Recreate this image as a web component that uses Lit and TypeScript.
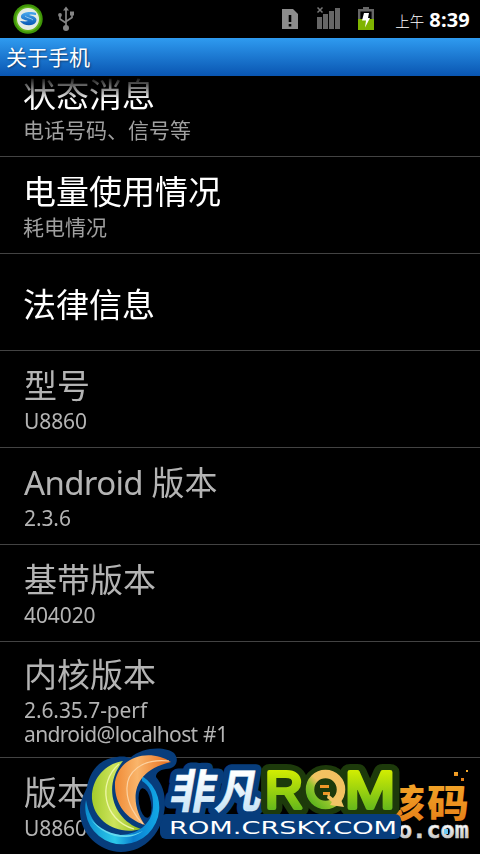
import { LitElement, css, html, nothing, svg } from 'lit';
import { customElement, property } from 'lit/decorators.js';

interface AboutItem {
  title: string;
  lines: string[];
  enabled?: boolean;
}

const ITEMS: AboutItem[] = [
  { title: '状态消息', lines: ['电话号码、信号等'], enabled: true },
  { title: '电量使用情况', lines: ['耗电情况'], enabled: true },
  { title: '法律信息', lines: [], enabled: true },
  { title: '型号', lines: ['U8860'] },
  { title: 'Android 版本', lines: ['2.3.6'] },
  { title: '基带版本', lines: ['404020'] },
  { title: '内核版本', lines: ['2.6.35.7-perf', 'android@localhost #1'] },
  { title: '版本号', lines: ['U8860'] },
];

// Long latin words are set a little tighter than digits.
const tighten = (text: string) =>
  text
    .split(/([a-z@]{5,})/i)
    .map((part, i) => (i % 2 ? html`<span class="latin">${part}</span>` : part));

@customElement('status-bar')
export class StatusBar extends LitElement {
  static styles = css`
    :host {
      display: flex;
      height: 38px;
      background: #000;
      color: #fff;
    }

    svg {
      display: block;
      flex: 1;
    }

    .clock {
      display: flex;
      align-items: baseline;
      gap: 5px;
      padding: 7px 10px 0 0;
      line-height: 26px;
    }

    .period {
      font-size: 14.5px;
      font-weight: 300;
    }

    .time {
      font-size: 20px;
      font-weight: 700;
      letter-spacing: 0.2px;
    }
  `;

  render() {
    return html`
      <svg height="38" viewBox="0 0 385 38" preserveAspectRatio="xMinYMin">
        <defs>
          <linearGradient id="s" x2="0" y2="1">
            <stop stop-color="#48a9ee" />
            <stop offset="1" stop-color="#0757b5" />
          </linearGradient>
        </defs>
        <circle cx="28" cy="19" r="14.7" fill="#3f9608" />
        <circle cx="28" cy="19" r="12.6" fill="#62b51b" />
        <circle cx="28" cy="19" r="11" fill="#e4ebe4" />
        <path
          d="M36 13c-5-2-14-1-15 3-1 3 4 4 7 5-3 1-6 0-8 0 3 5 13 6 16 1 2-4-2-6-7-7 3-1 5 0 7 0z"
          fill="url(#s)"
        />
        <path d="M25 16c2 2 6 2 8 4" fill="none" stroke="#8fc6ee" />
        <g fill="none" stroke="#858585" stroke-width="1.7">
          <path d="M66 9v18M60 16v3l6 4M72 15v2.500l-6 4" />
        </g>
        <path d="m66 6.500 3 4h-6z" fill="#858585" />
        <circle cx="60" cy="15" r="1.900" fill="#858585" />
        <path d="M70 11.500h4v4h-4z" fill="#858585" />
        <circle cx="66" cy="28" r="3" fill="#858585" />

        <path d="M282 9h11l5 5v15h-16z" fill="#8c8c8c" />
        <path d="M288.700 15h2.600v7h-2.600zM288.700 24h2.600v2.500h-2.600z" />

        <g fill="#666">
          <path d="M317 17h5v12h-5zM323 14h5v15h-5zM329 11h5v18h-5zM335 8h5v21h-5z" />
        </g>
        <path d="m317.500 7.500 5 5m0-5-5 5" stroke="#777" stroke-width="1.500" />

        <path d="M359.200 10.200h13.600v18.600h-13.600z" stroke="#666" stroke-width="2.400" />
        <path d="M363 7h6v3h-6z" fill="#666" />
        <path d="M358 19h16v11h-16z" fill="#7fb400" />
        <path d="M364 13h5l-1 5h2l-5 9.500 1-7h-4z" fill="#fff" />
      </svg>
      <div class="clock">
        <span class="period">上午</span>
        <span class="time">8:39</span>
      </div>
    `;
  }
}

@customElement('about-row')
export class AboutRow extends LitElement {
  static styles = css`
    :host {
      display: flex;
      flex-direction: column;
      justify-content: center;
      flex-shrink: 0;
      box-sizing: border-box;
      min-height: 97px;
      padding: 6px 24px 0;
      border-bottom: 1px solid #434343;
      color: #b4b4b4;
    }

    .title {
      font-size: 33px;
      line-height: 42px;
      white-space: nowrap;
    }

    .title.enabled {
      margin-left: -1px;
      color: #fff;
    }

    .summary {
      display: flex;
      flex-direction: column;
      padding: 2px 0 7px;
      font-size: 21px;
      line-height: 24px;
      letter-spacing: -0.1px;
      color: #b4b4b4;
    }

    .summary.cjk {
      margin-left: -1px;
      letter-spacing: 0;
      color: #a0a0a0;
    }

    .latin {
      letter-spacing: -0.65px;
    }
  `;

  @property({ attribute: false }) item!: AboutItem;

  render() {
    const { title, lines, enabled } = this.item;
    return html`
      <div class="title ${enabled ? 'enabled' : ''}">${tighten(title)}</div>
      ${lines.length
        ? html`<div class="summary ${enabled ? 'cjk' : ''}">
            ${lines.map((line) => html`<div>${tighten(line)}</div>`)}
          </div>`
        : nothing}
    `;
  }
}

@customElement('rom-badge')
export class RomBadge extends LitElement {
  static styles = css`
    :host {
      display: block;
    }

    svg {
      display: block;
    }

    .han {
      font: 700 46px 'Noto Sans CJK SC', sans-serif;
    }

    .rom {
      font: 400 51px 'Liberation Sans', sans-serif;
    }

    .site {
      font: 400 18.5px 'DejaVu Sans', sans-serif;
    }

    .mark {
      font: 900 38px 'Noto Sans CJK SC', sans-serif;
    }

    .domain {
      font: 700 23px 'DejaVu Sans Mono', monospace;
    }
  `;

  private letters() {
    return svg`
      <text x="265" y="807.500" textLength="38" lengthAdjust="spacingAndGlyphs">R</text>
      <text x="345" y="807.500" textLength="50" lengthAdjust="spacingAndGlyphs">M</text>
    `;
  }

  private han() {
    return svg`
      <g transform="translate(168 808) skewX(-10)">
        <text textLength="92" lengthAdjust="spacingAndGlyphs">非凡</text>
      </g>
    `;
  }

  render() {
    return html`
      <svg width="400" height="109" viewBox="80 745 400 109">
        <defs>
          <linearGradient id="orange" x2="0" y2="1">
            <stop stop-color="#f6ae2c" />
            <stop offset="1" stop-color="#e47b16" />
          </linearGradient>
          <linearGradient id="peel">
            <stop stop-color="#f08a35" />
            <stop offset=".4" stop-color="#f9b56b" />
            <stop offset="1" stop-color="#e66b1c" />
          </linearGradient>
          <linearGradient id="leaf">
            <stop stop-color="#a5cc2c" />
            <stop offset=".45" stop-color="#cce45c" />
            <stop offset="1" stop-color="#94bf1e" />
          </linearGradient>
          <linearGradient id="water">
            <stop stop-color="#0b8ed0" />
            <stop offset=".4" stop-color="#2cc9e9" />
            <stop offset=".65" stop-color="#0a7fd0" />
            <stop offset="1" stop-color="#12a9e6" />
          </linearGradient>
          <linearGradient id="lime" gradientUnits="userSpaceOnUse" x1="0" y1="768" x2="0" y2="812">
            <stop stop-color="#d8f000" />
            <stop offset="1" stop-color="#5fb51d" />
          </linearGradient>
          <linearGradient id="ice" x2="0" y2="1">
            <stop offset=".3" stop-color="#fff" />
            <stop offset="1" stop-color="#b9def5" />
          </linearGradient>
          <linearGradient id="gold" gradientUnits="userSpaceOnUse" x1="340" y1="775" x2="312" y2="803">
            <stop stop-color="#f4c060" />
            <stop offset=".5" stop-color="#f1c362" />
            <stop offset=".7" stop-color="#90c52c" />
            <stop offset="1" stop-color="#5fb51d" />
          </linearGradient>
          <linearGradient id="steel" x2="0" y2="1">
            <stop offset=".3" stop-color="#fff" />
            <stop offset="1" stop-color="#b5b5b5" />
          </linearGradient>
        </defs>

        <g fill="url(#orange)">
          <text class="mark" x="386" y="816.500" textLength="39" lengthAdjust="spacingAndGlyphs">该</text>
          <text class="mark" x="427" y="816.500" textLength="42" lengthAdjust="spacingAndGlyphs">码</text>
          <path d="M454 772h4v4h-4zM461 778h3v3h-3zM466 770h2v2h-2z" />
        </g>
        <text class="domain" x="398" y="837.500" fill="url(#steel)" stroke="#ccc" stroke-width=".6" textLength="71" lengthAdjust="spacingAndGlyphs">o.com</text>
        <path d="M444 829h4v5h-4z" fill="#6ec9f2" />

        <!-- dark outlines under the lettering -->
        <g fill="#073d7c" stroke="#073d7c" stroke-linejoin="round">
          <g class="han" stroke-width="13">${this.han()}</g>
        </g>
        <g class="rom" fill="#1d3a0b" stroke="#1d3a0b" stroke-width="16" stroke-linejoin="round">
          ${this.letters()}
          <circle cx="326" cy="790" r="17" />
        </g>
        <rect x="160" y="814" width="241" height="25" rx="6" fill="#073d7c" />

        <g class="han" fill="url(#ice)" stroke="#eaf5fc" stroke-width=".5">${this.han()}</g>
        <g class="rom" fill="url(#lime)" stroke="url(#lime)" stroke-width="4" stroke-linejoin="round">
          ${this.letters()}
        </g>
        <circle cx="325.500" cy="789.500" r="15.500" fill="none" stroke="url(#gold)" stroke-width="8.500" />
        <path d="M320 785h9v3h-9zM323 792h7v3h-7z" fill="#ef9728" />
        <path d="m328 794 6 5 5-4 5 12-14-2 2-3-5-4z" fill="#f2c466" />

        <text class="site" x="169" y="834" fill="#fff" textLength="228" lengthAdjust="spacingAndGlyphs">ROM.CRSKY.COM</text>

        <!-- swirl emblem -->
        <path
          d="M117 757C123 756 127 757 130 758 142 747 165 746 174 753 180 760 176 769 166 769 159 770 156 773 156 777 162 784 165 793 165 804 164 832 145 852 121 852 97 851 79 832 80 809 80 800 84 795 87 787 90 770 101 758 117 757z"
          fill="#073d7c"
        />
        <path
          d="M142 776A37 37 0 1 1 86 800C90 824 104 835 120 835 142 834 154 820 153 803 153 793 149 785 142 781z"
          fill="url(#water)"
        />
        <path
          d="M90 818C103 834 126 840 143 831 130 841 105 840 90 818z"
          fill="#63d9ef"
        />
        <ellipse cx="145" cy="803" rx="6" ry="15" transform="rotate(-10 145 803)" />
        <path
          d="M123 761C104 764 91 780 92 799 94 821 117 836 141 829 115 821 101 788 123 761z"
          fill="url(#leaf)"
        />
        <path d="M119 764C97 783 103 820 134 829" fill="none" stroke="#edf6a6" stroke-width="1.300" />
        <path
          d="M171 762C152 749 120 754 115 782 114 804 126 819 145 825 132 808 126 772 171 762z"
          fill="url(#peel)"
        />
        <path
          d="M169 761C142 758 126 772 127 790 127 804 136 817 143 824"
          fill="none"
          stroke="#fcd2a2"
          stroke-width="1.200"
        />
      </svg>
    `;
  }
}

@customElement('app-root')
export class AppRoot extends LitElement {
  static styles = css`
    :host {
      display: flex;
      flex-direction: column;
      position: relative;
      width: 480px;
      height: 854px;
      overflow: hidden;
      background: #000;
      font-family: 'Noto Sans', 'Noto Sans CJK SC', sans-serif;
    }

    .header {
      box-sizing: border-box;
      flex-shrink: 0;
      height: 38px;
      padding-left: 6px;
      background: linear-gradient(#2f9bf0, #0955b1);
      color: #fff;
      font-size: 21px;
      line-height: 38px;
      text-shadow: 1px 1px 2px #123e70;
    }

    .viewport {
      display: flex;
      flex: 1;
      flex-direction: column;
      min-height: 0;
      overflow: hidden;
      -webkit-mask-image: linear-gradient(transparent, #000 24px);
      mask-image: linear-gradient(transparent, #000 24px);
    }

    .list {
      display: flex;
      flex-direction: column;
      margin-top: -16px;
    }

    .tall {
      min-height: 116px;
      padding-top: 8px;
    }

    rom-badge {
      position: absolute;
      right: 0;
      bottom: 0;
    }
  `;

  render() {
    return html`
      <status-bar></status-bar>
      <div class="header">关于手机</div>
      <div class="viewport">
        <div class="list">
          ${ITEMS.map(
            (item) => html`<about-row
              class=${item.lines.length > 1 ? 'tall' : ''}
              .item=${item}
            ></about-row>`
          )}
        </div>
      </div>
      <rom-badge></rom-badge>
    `;
  }
}

declare global {
  interface HTMLElementTagNameMap {
    'status-bar': StatusBar;
    'about-row': AboutRow;
    'rom-badge': RomBadge;
    'app-root': AppRoot;
  }
}
